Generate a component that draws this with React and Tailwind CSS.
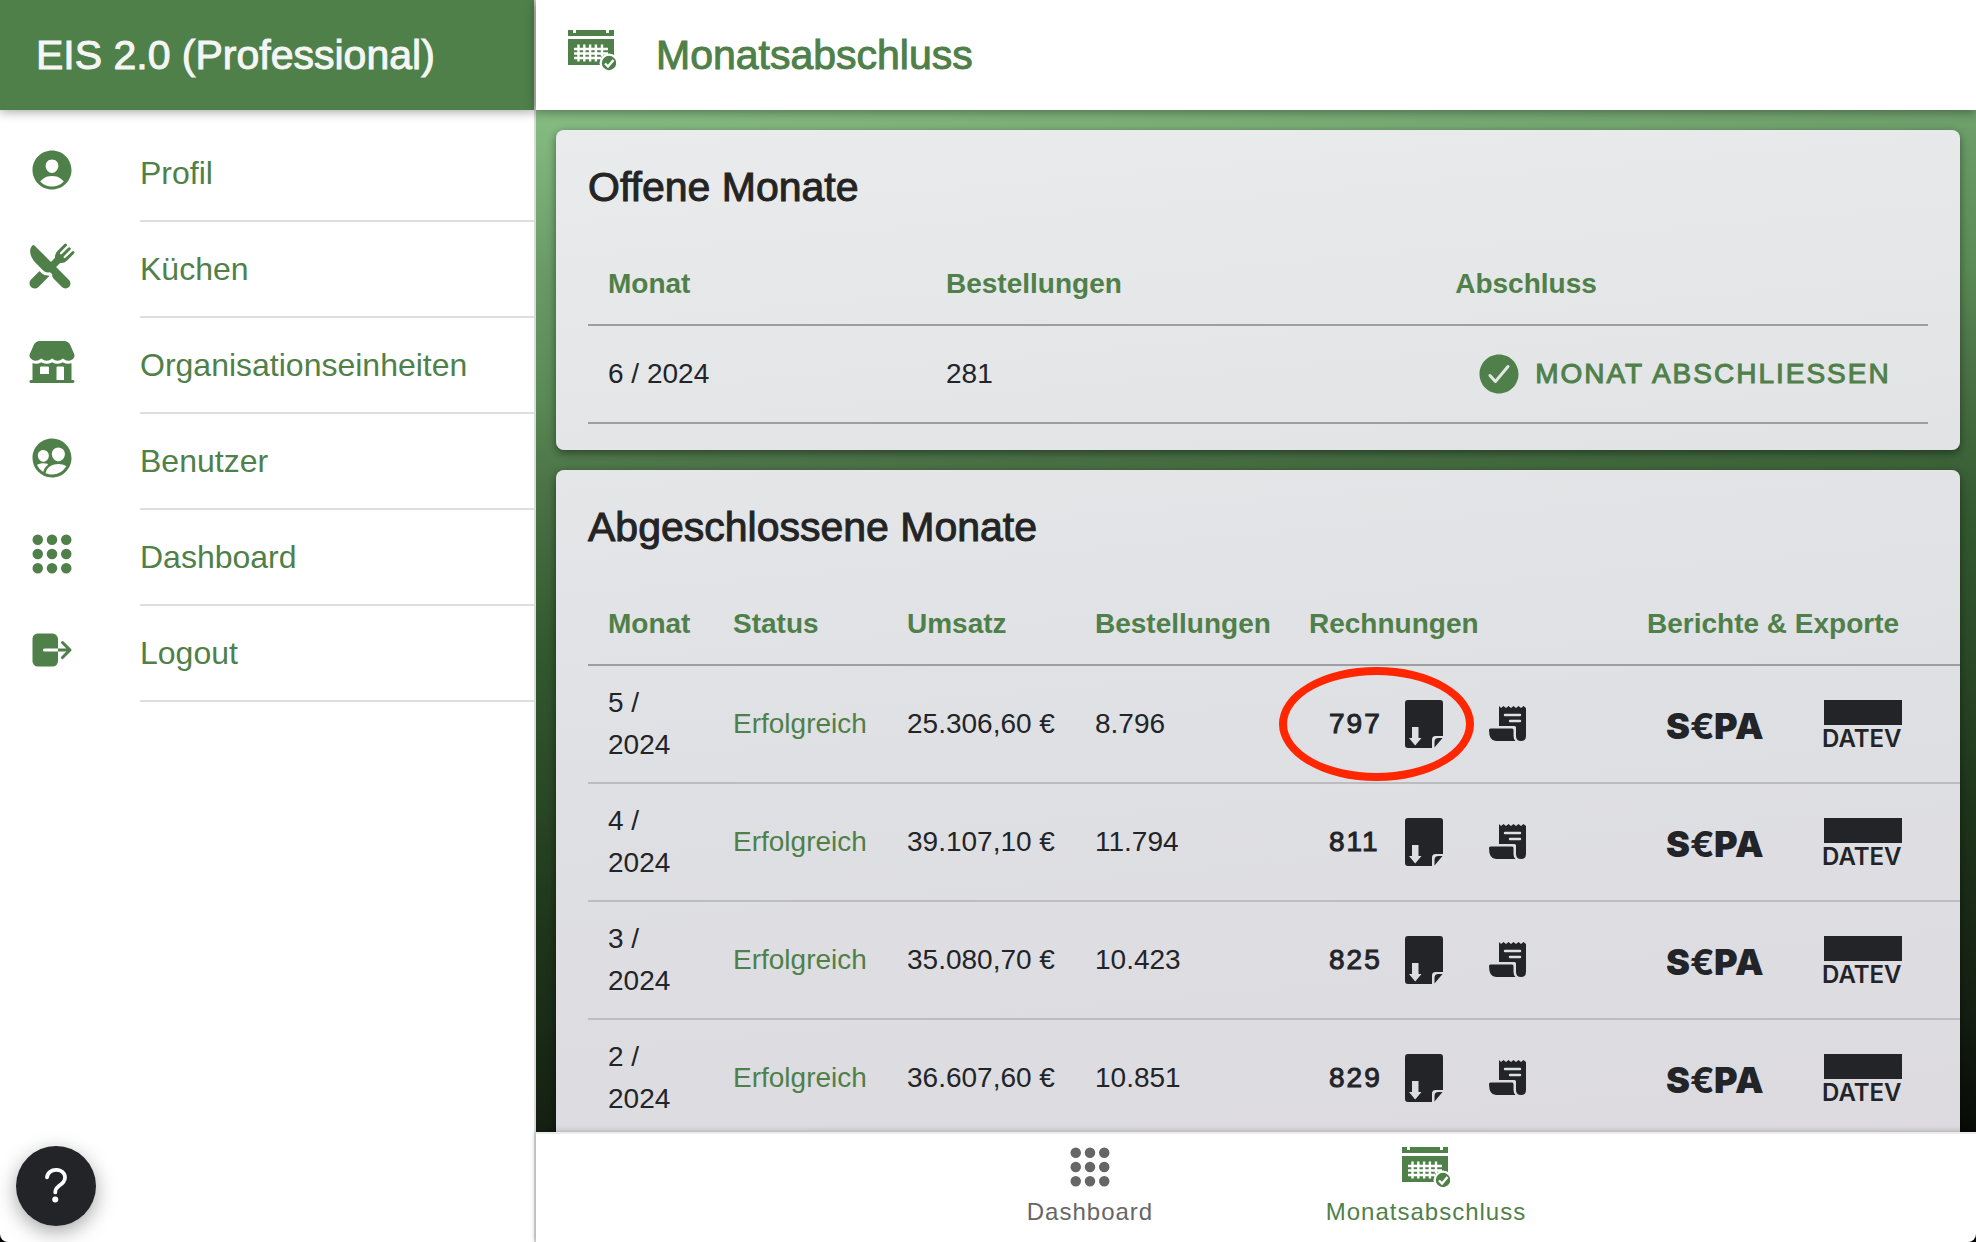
import {
  IoApps,
  IoCheckmarkCircle,
  IoHelp,
  IoLogOut,
  IoPeopleCircle,
  IoPersonCircle,
  IoRestaurant,
  IoStorefront,
} from "react-icons/io5";

const menuItems = [
  { label: "Profil", Icon: IoPersonCircle },
  { label: "Küchen", Icon: IoRestaurant },
  { label: "Organisationseinheiten", Icon: IoStorefront },
  { label: "Benutzer", Icon: IoPeopleCircle },
  { label: "Dashboard", Icon: IoApps },
  { label: "Logout", Icon: IoLogOut },
];

const closedMonths = [
  { month: 5, year: 2024, revenue: "25.306,60 €", orders: "8.796", invoices: 797, marked: true },
  { month: 4, year: 2024, revenue: "39.107,10 €", orders: "11.794", invoices: 811 },
  { month: 3, year: 2024, revenue: "35.080,70 €", orders: "10.423", invoices: 825 },
  { month: 2, year: 2024, revenue: "36.607,60 €", orders: "10.851", invoices: 829 },
];

const CalendarIcon = () => (
  <svg viewBox="0 0 48 48" className="size-12" aria-hidden="true">
    <path fill="currentColor" d="M0 4h5v3h3V4h30v3h3V4h5v6H0zM0 13h46v26H0z" />
    <path
      stroke="#fff"
      strokeWidth="2.4"
      d="M6 23h34M6 27.5h34M6 32h27M10.500 18.500v17M16.300 18.500v17M22.100 18.500v17M27.900 18.500v17M34 18.500v12"
    />
    <circle cx="41" cy="37" r="9.5" fill="#fff" />
    <circle cx="41" cy="37" r="7.2" fill="currentColor" />
    <path fill="none" stroke="#fff" strokeWidth="2.4" d="m37 37.5 3 3 5.500-6.500" />
  </svg>
);

const DownloadIcon = () => (
  <svg viewBox="0 0 38 48" className="h-12 w-[38px]" aria-hidden="true">
    <path
      fill="currentColor"
      fillRule="evenodd"
      d="M3 0h32q3 0 3 3v33h-7.500q-3.500 0-3.500 3.500V48H3q-3 0-3-3V3q0-3 3-3zM7 27v11H4l6.200 7.500L16.500 38h-3V27z"
    />
    <path fill="currentColor" d="M29.500 47.500V42q0-4 4-4H37.500z" />
  </svg>
);

const ReceiptIcon = () => (
  <svg viewBox="0 0 38 36" className="h-9 w-[38px]" aria-hidden="true">
    <path
      fill="currentColor"
      d="M10 0l2 2 2.500-2 2.500 2 2.500-2 2.500 2 2.500-2 2.500 2 2.500-2 2.500 2 2.500-2 2.500 2V30q0 5-5 5t-5-5v-8.500q0-1.500-1.500-1.500H10z"
    />
    <path
      fill="currentColor"
      d="M1.500 22.500H23q1.500 0 1.500 1.500v6q0 3.500 2 5H7q-7 0-7-11 0-1.500 1.500-1.500z"
    />
    <path stroke="#e0e0e3" strokeWidth="2.4" strokeLinecap="round" d="M16 9h15M21 15h10" />
  </svg>
);

const SepaLogo = () => (
  <svg viewBox="0 0 96 44" className="h-11 w-24 overflow-visible" role="img" aria-label="SEPA">
    <g fill="currentColor" fontFamily="Inter, sans-serif" fontWeight="900" fontSize="36">
      <text x="-1" y="37">S</text>
      <text x="23" y="37" fontWeight="700">€</text>
      <text x="47" y="37">P</text>
      <text x="68" y="37">A</text>
    </g>
  </svg>
);

const DatevLogo = () => (
  <svg viewBox="0 0 78 48" className="h-12 w-[78px] overflow-visible" role="img" aria-label="DATEV">
    <rect width="78" height="25" fill="currentColor" />
    <text
      x="-2"
      y="47"
      fill="currentColor"
      fontFamily="Inter, sans-serif"
      fontWeight="600"
      fontSize="24"
    >
      DATEV
    </text>
  </svg>
);

const Card = ({ title, children }) => (
  <section className="shrink-0 overflow-hidden rounded-lg bg-[linear-gradient(175deg,#e9ebed,#e2e3e5)] pt-8 pb-[26px] pl-8 shadow-[0_3px_8px_rgba(0,0,0,0.45)] last:bg-[linear-gradient(175deg,#e5e6e8,#dfe0e4_40%,#dcdadf)]">
    <h2 className="mb-8 text-[41px] leading-[50px] text-[#242424] [-webkit-text-stroke:1px]">
      {title}
    </h2>
    {children}
  </section>
);

const Th = ({ className, children }) => (
  <th className={`px-5 py-[19px] text-left font-bold text-[#4f8049] ${className}`}>{children}</th>
);

const OpenMonths = () => (
  <Card title="Offene Monate">
    <div className="pr-8">
      <table className="w-full table-fixed text-[28px] leading-[42px]">
        <thead>
          <tr className="border-b-2 border-[#9c9ea0]">
            <Th className="w-[338px]">Monat</Th>
            <Th className="w-[38%]">Bestellungen</Th>
            <Th>Abschluss</Th>
          </tr>
        </thead>
        <tbody>
          <tr className="border-b-2 border-[#9c9ea0]">
            <td className="px-5">6 / 2024</td>
            <td className="px-5">281</td>
            <td className="h-[98px] px-5">
              <button className="ml-5 flex items-center gap-3 tracking-[2px] whitespace-nowrap text-[#4f8049] uppercase">
                <IoCheckmarkCircle className="size-12" />
                <span className="[-webkit-text-stroke:1px]">Monat abschliessen</span>
              </button>
            </td>
          </tr>
        </tbody>
      </table>
    </div>
  </Card>
);

const ClosedMonths = () => (
  <Card title="Abgeschlossene Monate">
    <table className="w-full min-w-[1384px] table-fixed text-[28px] leading-[42px]">
      <thead>
        <tr className="border-b-2 border-[#9c9ea0]">
          <Th className="w-[125px]">Monat</Th>
          <Th className="w-[174px]">Status</Th>
          <Th className="w-[188px]">Umsatz</Th>
          <Th className="w-[214px]">Bestellungen</Th>
          <Th className="w-[338px]">Rechnungen</Th>
          <Th className="whitespace-nowrap">Berichte &amp; Exporte</Th>
        </tr>
      </thead>
      <tbody>
        {closedMonths.map((m) => (
          <tr key={m.month} className="border-b-2 border-[#bdbdc1]">
            <td className="px-5 py-4">
              {m.month} /<br />
              {m.year}
            </td>
            <td className="px-5 text-[#4f8049]">Erfolgreich</td>
            <td className="px-5 whitespace-nowrap">{m.revenue}</td>
            <td className="px-5">{m.orders}</td>
            <td className="px-5">
              <div className="relative flex items-center pl-5">
                <button className="flex items-center gap-6 tracking-[2px]">
                  <span className="w-[52px] text-left [-webkit-text-stroke:1px]">{m.invoices}</span>
                  <DownloadIcon />
                </button>
                <button className="ml-[46px]" aria-label="Beleg">
                  <ReceiptIcon />
                </button>
                {m.marked && (
                  <span className="pointer-events-none absolute top-1/2 -left-[30px] h-[114px] w-[195px] -translate-y-1/2 rounded-[50%] border-8 border-[#ff2600]" />
                )}
              </div>
            </td>
            <td className="px-5">
              <div className="flex items-center gap-[61px] pl-5">
                <button>
                  <SepaLogo />
                </button>
                <button>
                  <DatevLogo />
                </button>
              </div>
            </td>
          </tr>
        ))}
      </tbody>
    </table>
  </Card>
);

const Sidebar = () => (
  <aside className="relative flex w-[536px] shrink-0 flex-col border-r-2 border-[#dbdbdc] bg-white">
    <header className="flex h-[110px] items-center bg-[#4f8049] px-9 shadow-[0_2px_10px_rgba(0,0,0,0.35)]">
      <h1 className="text-[41px] leading-[50px] text-[#f4f5f4] [-webkit-text-stroke:1px]">
        EIS 2.0 (Professional)
      </h1>
    </header>
    <nav className="pt-4">
      {menuItems.map(({ label, Icon }) => (
        <a key={label} href="#" className="flex items-center pl-7 text-[#4f8049]">
          <Icon className="mb-2 size-12" />
          <span className="ml-16 flex h-24 flex-1 items-center border-b-2 border-[#dedede] text-[32px]">
            {label}
          </span>
        </a>
      ))}
    </nav>
    <button
      aria-label="Hilfe"
      className="absolute bottom-4 left-4 flex size-20 items-center justify-center rounded-full bg-[#222428] text-white shadow-[0_6px_20px_rgba(0,0,0,0.35)]"
    >
      <IoHelp className="size-12" />
    </button>
  </aside>
);

const TabBar = () => (
  <footer className="relative z-10 flex h-[110px] shrink-0 justify-center border-t-2 border-[#ececec] bg-white pl-1 text-2xl shadow-[0_0_6px_rgba(0,0,0,0.3)]">
    <a href="#" className="flex w-[336px] flex-col items-center pt-[9px] text-[#666666]">
      <IoApps className="size-12" />
      <span className="mt-[5px] tracking-[1px]">Dashboard</span>
    </a>
    <a href="#" className="flex w-[336px] flex-col items-center pt-[9px] text-[#4f8049]">
      <CalendarIcon />
      <span className="mt-[5px] tracking-[1px]">Monatsabschluss</span>
    </a>
  </footer>
);

export default function App() {
  return (
    <div className="h-screen bg-black font-['Liberation_Sans',Arial,sans-serif] text-[#222428]">
      <div className="flex h-full overflow-hidden rounded-b-lg">
        <Sidebar />
        <div className="flex min-w-0 flex-1 flex-col">
          <header className="relative z-10 flex h-[110px] shrink-0 items-center gap-10 bg-white pl-8 text-[#4f8049] shadow-[0_2px_10px_rgba(0,0,0,0.4)]">
            <div className="mb-2.5">
              <CalendarIcon />
            </div>
            <h1 className="text-[41px] leading-[50px] [-webkit-text-stroke:1px]">
              Monatsabschluss
            </h1>
          </header>
          <main className="flex min-h-0 flex-1 flex-col gap-5 overflow-hidden bg-[linear-gradient(175deg,#87bd83,#6a9b67_14%,#5a8a55_25%,#4d7549_32%,#335a30_46%,#2b4a27_58%,#1f361b_71%,#151f12_89%,#080c07)] px-5 pt-5 pr-4">
            <OpenMonths />
            <ClosedMonths />
          </main>
          <TabBar />
        </div>
      </div>
    </div>
  );
}
